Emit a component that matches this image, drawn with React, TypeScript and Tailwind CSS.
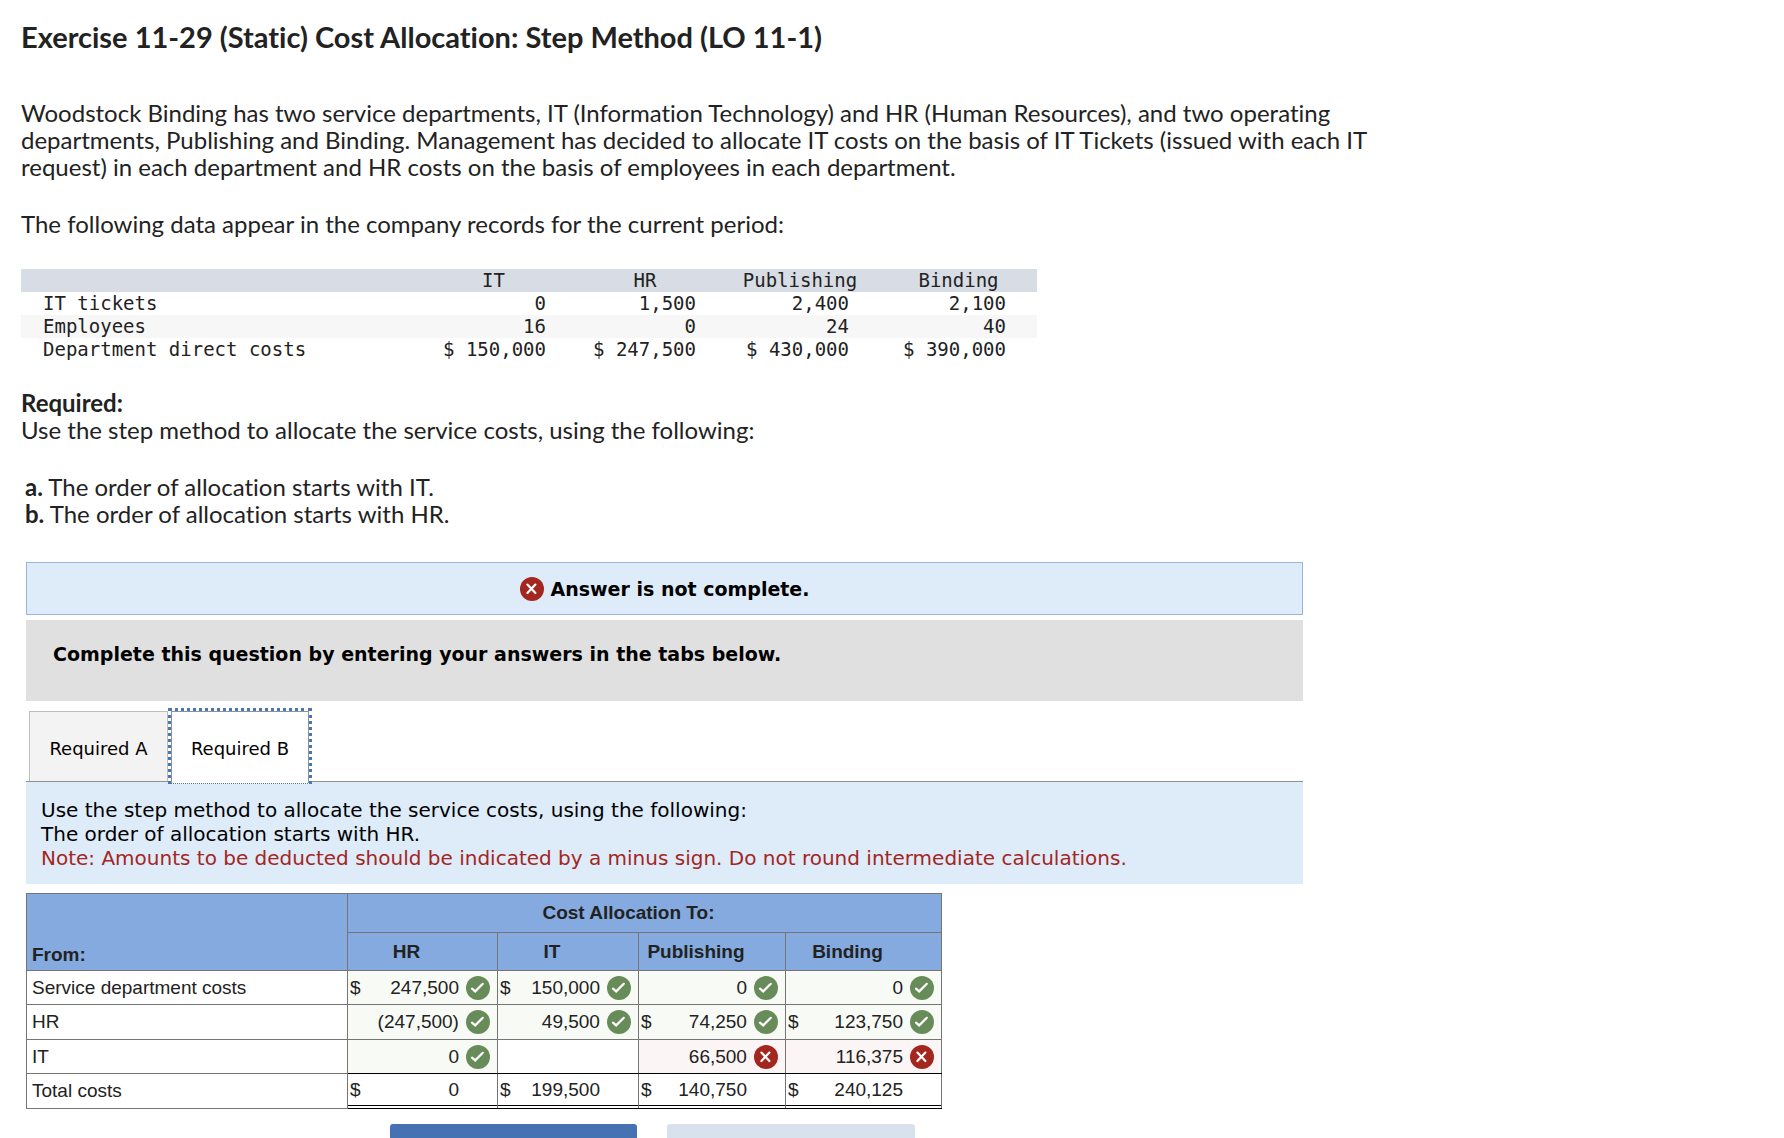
import { useState } from "react";

type Mark = "right" | "wrong";

type Entry = {
  value?: string;
  dollar?: boolean;
  mark?: Mark;
};

const RECORD_HEADS = ["IT", "HR", "Publishing", "Binding"];

const RECORDS = [
  { label: "IT tickets", values: ["0", "1,500", "2,400", "2,100"] },
  { label: "Employees", values: ["16", "0", "24", "40"] },
  {
    label: "Department direct costs",
    values: ["$ 150,000", "$ 247,500", "$ 430,000", "$ 390,000"],
  },
];

const RECORD_PADS = ["pr-6", "pr-6", "pr-[31px]", "pr-[31px]"];

const ALLOCATIONS: { label: string; entries: Entry[] }[] = [
  {
    label: "Service department costs",
    entries: [
      { value: "247,500", dollar: true, mark: "right" },
      { value: "150,000", dollar: true, mark: "right" },
      { value: "0", mark: "right" },
      { value: "0", mark: "right" },
    ],
  },
  {
    label: "HR",
    entries: [
      { value: "(247,500)", mark: "right" },
      { value: "49,500", mark: "right" },
      { value: "74,250", dollar: true, mark: "right" },
      { value: "123,750", dollar: true, mark: "right" },
    ],
  },
  {
    label: "IT",
    entries: [
      { value: "0", mark: "right" },
      {},
      { value: "66,500", mark: "wrong" },
      { value: "116,375", mark: "wrong" },
    ],
  },
];

const TOTALS = ["0", "199,500", "140,750", "240,125"];

function MarkIcon({ mark }: { mark: Mark }) {
  return (
    <svg
      viewBox="0 0 24 24"
      className="w-6 h-6 shrink-0"
      role="img"
      aria-label={mark === "right" ? "Correct" : "Incorrect"}
    >
      <circle cx="12" cy="12" r="12" fill={mark === "right" ? "#678c59" : "#a3261f"} />
      <path
        d={mark === "right" ? "M6 12.6l3.2 2.8 7.6-7.6" : "M7.4 7.6l8 8.4M15.4 7.6l-8 8.4"}
        fill="none"
        stroke="#fff"
        strokeWidth="2.2"
        strokeLinecap="round"
      />
    </svg>
  );
}

function RecordsTable() {
  return (
    <table className="mt-8 w-[1016px] table-fixed font-['DejaVu_Sans_Mono',monospace] text-[19px] leading-[23px]">
      <colgroup>
        <col />
        <col className="w-[153px]" />
        <col className="w-[150px]" />
        <col className="w-[160px]" />
        <col className="w-[157px]" />
      </colgroup>
      <thead>
        <tr className="bg-[#d8dce5]">
          <td />
          {RECORD_HEADS.map((h) => (
            <th key={h} scope="col" className="p-0 font-normal text-center">
              {h}
            </th>
          ))}
        </tr>
      </thead>
      <tbody>
        {RECORDS.map((row) => (
          <tr key={row.label} className="even:bg-[#f7f7f7]">
            <th scope="row" className="p-0 pl-[22px] font-normal text-left">
              {row.label}
            </th>
            {row.values.map((v, i) => (
              <td key={i} className={`p-0 text-right whitespace-nowrap ${RECORD_PADS[i]}`}>
                {v}
              </td>
            ))}
          </tr>
        ))}
      </tbody>
    </table>
  );
}

function Tab({
  label,
  active,
  onClick,
}: {
  label: string;
  active: boolean;
  onClick: () => void;
}) {
  return (
    <button
      role="tab"
      aria-selected={active}
      onClick={onClick}
      className={
        active
          ? "relative -mb-1 h-[76px] w-36 border-[3px] border-b-1 border-dotted border-[#4676bc] bg-white"
          : "mt-[3px] h-[70px] w-[139px] border border-b-0 border-[#bdbdbd] bg-[#f3f3f3]"
      }
    >
      <span
        className={
          active
            ? "flex h-full items-center justify-center border border-b-0 border-[#919191] pt-0.5"
            : "flex h-full items-center justify-center pt-1"
        }
      >
        {label}
      </span>
    </button>
  );
}

function AllocationCell({ entry, last }: { entry: Entry; last: boolean }) {
  const tint =
    entry.mark === "right" ? "bg-[#f8faf6]" : entry.mark === "wrong" ? "bg-[#fcf5f5]" : "";
  return (
    <td className={`p-0 border border-[#757575] ${last ? "border-b-black" : ""} ${tint}`}>
      <div className="flex items-center pl-0.5 pr-[7px]">
        {entry.dollar && <span>$</span>}
        <span className="ml-auto mr-[7px]">{entry.value}</span>
        {entry.mark && <MarkIcon mark={entry.mark} />}
      </div>
    </td>
  );
}

function AllocationTable() {
  return (
    <table className="mt-[9px] w-[916px] table-fixed border-collapse font-['Liberation_Sans',Arial,sans-serif] text-[19px] leading-[22px] text-[#222]">
      <colgroup>
        <col />
        <col className="w-[150px]" />
        <col className="w-[141px]" />
        <col className="w-[147px]" />
        <col className="w-[156px]" />
      </colgroup>
      <thead className="bg-[#84aae0]">
        <tr className="h-[39px]">
          <th
            rowSpan={2}
            scope="col"
            className="p-0 pl-[5px] pb-1 border border-[#757575] text-left align-bottom"
          >
            From:
          </th>
          <th colSpan={4} scope="colgroup" className="p-0 pr-8 border border-[#757575] text-center">
            Cost Allocation To:
          </th>
        </tr>
        <tr className="h-[38px]">
          {["HR", "IT", "Publishing", "Binding"].map((h) => (
            <th key={h} scope="col" className="p-0 pr-8 border border-[#757575] text-center">
              {h}
            </th>
          ))}
        </tr>
      </thead>
      <tbody>
        {ALLOCATIONS.map((row, r) => (
          <tr key={row.label} className="h-[34px] even:h-[35px]">
            <th
              scope="row"
              className="p-0 pl-[5px] border border-[#757575] font-normal text-left"
            >
              {row.label}
            </th>
            {row.entries.map((entry, i) => (
              <AllocationCell key={i} entry={entry} last={r === ALLOCATIONS.length - 1} />
            ))}
          </tr>
        ))}
        <tr className="h-[35px]">
          <th scope="row" className="p-0 pl-[5px] border border-[#757575] font-normal text-left">
            Total costs
          </th>
          {TOTALS.map((total, i) => (
            <td key={i} className="p-0 pb-0.5 border border-[#757575] border-y-black align-bottom">
              {/* inner rule plus the cell border make the double underline */}
              <div className="flex h-8 items-center justify-between border-b border-black pl-0.5 pr-[38px]">
                <span>$</span>
                <span>{total}</span>
              </div>
            </td>
          ))}
        </tr>
      </tbody>
    </table>
  );
}

export default function App() {
  const [tab, setTab] = useState("Required B");

  return (
    <main className="min-h-screen bg-white pt-5 pl-[21px] text-[#222] font-[Lato,sans-serif] text-2xl leading-[27px] [font-variant-ligatures:none]">
      <h1 className="text-[29px] leading-[34px] font-bold">
        Exercise 11-29 (Static) Cost Allocation: Step Method (LO 11-1)
      </h1>

      <p className="mt-[45px] max-w-[1370px]">
        Woodstock Binding has two service departments, IT (Information Technology) and HR (Human
        Resources), and two operating departments, Publishing and Binding. Management has decided
        to allocate IT costs on the basis of IT Tickets (issued with each IT request) in each
        department and HR costs on the basis of employees in each department.
      </p>
      <p className="mt-[30px]">
        The following data appear in the company records for the current period:
      </p>

      <RecordsTable />

      <h2 className="mt-7 font-bold">Required:</h2>
      <p>Use the step method to allocate the service costs, using the following:</p>
      <div className="mt-[30px] pl-1">
        <p>
          <b>a.</b> The order of allocation starts with IT.
        </p>
        <p>
          <b>b.</b> The order of allocation starts with HR.
        </p>
      </div>

      <section className="mt-[35px] ml-[5px] max-w-[1277px] font-['DejaVu_Sans',Verdana,sans-serif] text-[19px] leading-6 text-black">
        <div className="flex h-[53px] items-center justify-center gap-[7px] border border-[#9ab5dc] bg-[#deebf8] font-bold">
          <MarkIcon mark="wrong" />
          Answer is not complete.
        </div>
        <div className="mt-[5px] bg-[#e0e0e0] pt-[22px] pb-[35px] pl-[27px] font-bold">
          Complete this question by entering your answers in the tabs below.
        </div>

        <div role="tablist" className="mt-[7px] flex h-[73px] pl-[3px] text-lg">
          {["Required A", "Required B"].map((t) => (
            <Tab key={t} label={t} active={tab === t} onClick={() => setTab(t)} />
          ))}
        </div>
        <div className="border-t border-[#919191] bg-[#deebf8] pt-4 pb-[14px] pl-[15px] text-xl leading-6">
          <p>Use the step method to allocate the service costs, using the following:</p>
          <p>The order of allocation starts with {tab === "Required A" ? "IT" : "HR"}.</p>
          <p className="text-[#a3261f]">
            Note: Amounts to be deducted should be indicated by a minus sign. Do not round
            intermediate calculations.
          </p>
        </div>

        <AllocationTable />

        <div className="mt-[15px] flex gap-[30px] pl-[364px]">
          <button
            aria-label="Required A"
            onClick={() => setTab("Required A")}
            className="h-10 w-[247px] rounded-[3px] bg-[#4672b3]"
          />
          <button
            aria-label="Required B"
            onClick={() => setTab("Required B")}
            className="h-10 w-[248px] rounded-[3px] bg-[#d8e2ef]"
          />
        </div>
      </section>
    </main>
  );
}
